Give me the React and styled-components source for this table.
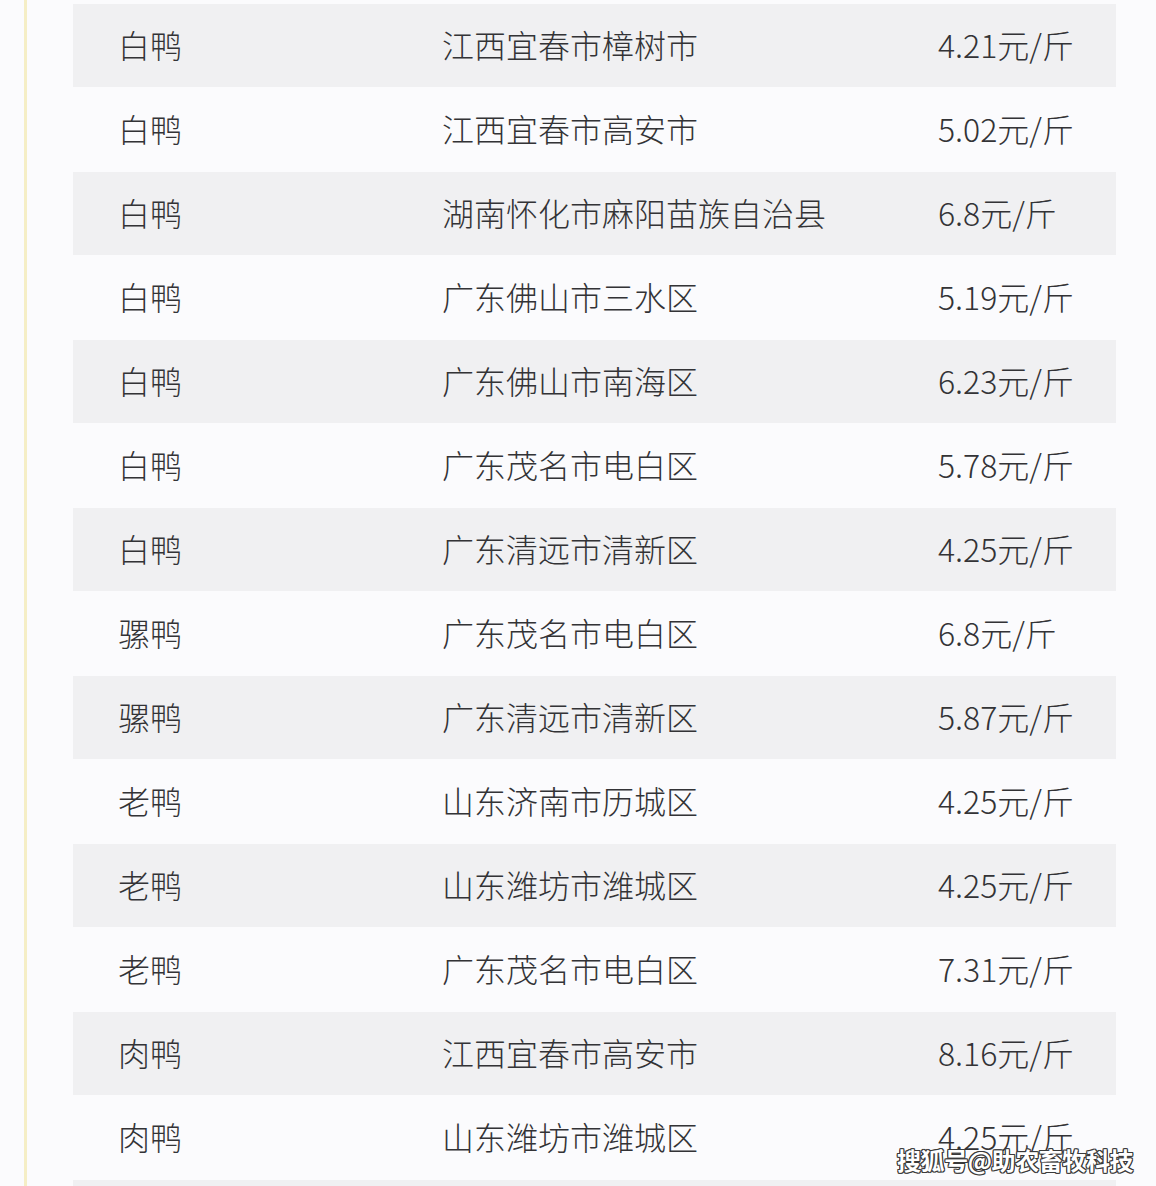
import React from 'react'
import styled, { createGlobalStyle } from 'styled-components'

const rows = [
  ['白鸭', '江西宜春市樟树市', '4.21元/斤'],
  ['白鸭', '江西宜春市高安市', '5.02元/斤'],
  ['白鸭', '湖南怀化市麻阳苗族自治县', '6.8元/斤'],
  ['白鸭', '广东佛山市三水区', '5.19元/斤'],
  ['白鸭', '广东佛山市南海区', '6.23元/斤'],
  ['白鸭', '广东茂名市电白区', '5.78元/斤'],
  ['白鸭', '广东清远市清新区', '4.25元/斤'],
  ['骡鸭', '广东茂名市电白区', '6.8元/斤'],
  ['骡鸭', '广东清远市清新区', '5.87元/斤'],
  ['老鸭', '山东济南市历城区', '4.25元/斤'],
  ['老鸭', '山东潍坊市潍城区', '4.25元/斤'],
  ['老鸭', '广东茂名市电白区', '7.31元/斤'],
  ['肉鸭', '江西宜春市高安市', '8.16元/斤'],
  ['肉鸭', '山东潍坊市潍城区', '4.25元/斤'],
  ['', '', ''],
]

const GlobalStyle = createGlobalStyle`
  html, body {
    margin: 0;
    padding: 0;
    background: #fbfbfd;
    overflow: hidden;
  }
  body {
    font-family: "Noto Sans CJK SC", "Noto Sans", sans-serif;
  }
`

const Page = styled.div`
  position: relative;
  height: 1186px;
  padding-left: 24px;
  overflow: hidden;
`

const Article = styled.div`
  border-left: 3px solid #f5eec6;
  padding: 4px 40px 0 46px;
  min-height: 100%;
`

const Table = styled.div`
  display: grid;
  grid-template-columns: 324px 496px 1fr;
  row-gap: 1px;
`

const Cell = styled.div`
  height: 83px;
  box-sizing: border-box;
  display: flex;
  align-items: center;
  padding: 0 0 4px 45px;
  font-size: 32px;
  font-weight: 300;
  color: #333336;
  white-space: nowrap;
  background: ${p => (p.$shade ? '#f0f0f2' : 'transparent')};
`

const Watermark = styled.div`
  position: absolute;
  left: 897px;
  top: 1142px;
  font-size: 24px;
  font-weight: 700;
  color: #ffffff;
  letter-spacing: -0.4px;
  text-shadow: 1px 1px 0 #3a3a3a, -1px -1px 0 #3a3a3a, 1px -1px 0 #3a3a3a,
    -1px 1px 0 #3a3a3a, 0 1px 0 #3a3a3a, 1px 0 0 #3a3a3a, 0 -1px 0 #3a3a3a,
    -1px 0 0 #3a3a3a;
`

export default function App() {
  return (
    <>
      <GlobalStyle />
      <Page>
        <Article>
          <Table>
            {rows.map((r, i) =>
              r.map((c, j) => (
                <Cell key={i + '-' + j} $shade={i % 2 === 0}>
                  {c}
                </Cell>
              ))
            )}
          </Table>
        </Article>
        <Watermark>搜狐号@助农畜牧科技</Watermark>
      </Page>
    </>
  )
}
